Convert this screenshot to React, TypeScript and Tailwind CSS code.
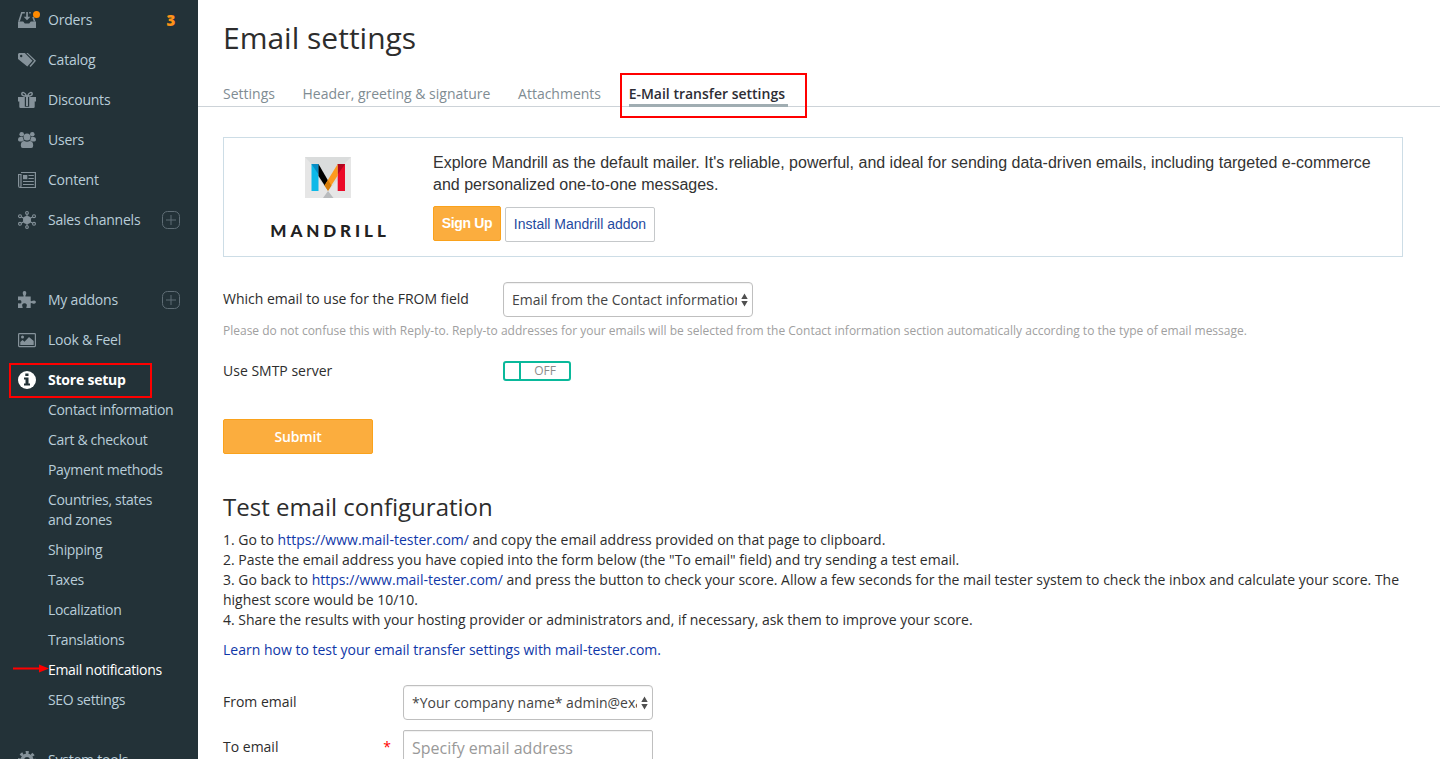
import React from "react";

const OrdersIcon = () => (
  <svg width="18" height="18" viewBox="0 0 18 18" fill="currentColor">
    <path d="M0 10.500h5.200l1.600 2h4.400l1.600-2H18V17H0z" />
    <path d="M1 10.500 3.800 1.800h3M15 6l1.600 4.500" fill="none" stroke="currentColor" strokeWidth="1.600" />
    <path d="M8.200 1h1.700v4.700h2.500L9 9.300 5.700 5.700h2.500zM11.200 1h1.500v1.600h-1.500z" />
  </svg>
);
const TagsIcon = () => (
  <svg width="18" height="18" viewBox="0 0 18 18" fill="currentColor">
    <path fillRule="evenodd" d="M0 3 1 2h5.800L14.500 9.700 9.300 15.500 0 8zM3.200 3.800a1.200 1.200 0 1 0 0 2.400 1.200 1.200 0 0 0 0-2.400z" />
    <path d="M8.300 2h1.500L18 9.800 12.600 15.900l-1.100-1 4.600-5.100z" />
  </svg>
);
const GiftIcon = () => (
  <svg width="18" height="18" viewBox="0 0 18 18" fill="currentColor">
    <path d="M0 6h6.800v4.500H0zM11.200 6H18v4.500h-6.800zM1.300 10h5.500v7H2.500q-1.200 0-1.200-1.200zM11.200 10h5.500v5.800q0 1.200-1.200 1.200h-4.300zM6.500 15.800h5V17h-5zM8 6h2v9H8z" />
    <path d="M8.500 5.200C7.300 1 3.800.6 3.800 2.800 3.800 4.700 6 5.200 8.500 5.200zM9.500 5.200c1.200-4.200 4.700-4.600 4.700-2.400C14.200 4.700 12 5.200 9.500 5.200z" fill="none" stroke="currentColor" strokeWidth="1.500" />
  </svg>
);
const UsersIcon = () => (
  <svg width="18" height="18" viewBox="0 0 18 18" fill="currentColor">
    <circle cx="3.700" cy="3.300" r="2.300" />
    <circle cx="14.300" cy="3.300" r="2.300" />
    <circle cx="9" cy="6" r="3.500" />
    <path d="M0 8.500Q0 6 2 6h2.700q.2 2.200 1.600 3.500-1.700.2-2.500 1H1.500Q0 10.500 0 8.500zM18 8.500Q18 6 16 6h-2.700q-.2 2.200-1.600 3.500 1.700.2 2.500 1h2.300q1.500 0 1.500-2zM2.800 14.500q0-4.300 3.500-4.500 2.700 1.400 5.400 0 3.500.2 3.500 4.500 0 2.500-2 2.500H4.800q-2 0-2-2.500z" />
  </svg>
);
const NewsIcon = () => (
  <svg width="18" height="18" viewBox="0 0 18 18" fill="none" stroke="currentColor" strokeWidth="1.200">
    <path d="M3 1.500h14.400v15H2.200Q.6 16.500.6 15V3.500H3V15q0 1.500-1.200 1.500" />
    <path d="M10.500 4.500h5.300M10.500 7.500h5.300M5 10.500h10.800M5 13.500h10.800" />
    <path d="M5 4h4.300v4.200H5z" fill="currentColor" stroke="none" />
  </svg>
);
const ChannelsIcon = () => (
  <svg width="18" height="18" viewBox="0 0 18 18" fill="none" stroke="currentColor" strokeWidth="1.100">
    <circle cx="9" cy="9" r="4" fill="currentColor" stroke="none" />
    <path d="M9 3v12M3.500 6l11 6M14.500 6l-11 6" />
    <circle cx="9" cy="1.900" r="1.350" />
    <circle cx="9" cy="16.100" r="1.350" />
    <circle cx="2" cy="5.200" r="1.450" />
    <circle cx="16" cy="5.200" r="1.450" />
    <circle cx="2" cy="12.800" r="1.450" />
    <circle cx="16" cy="12.800" r="1.450" />
  </svg>
);
const PuzzleIcon = () => (
  <svg width="18" height="18" viewBox="0 0 18 18" fill="currentColor">
    <path transform="translate(0 -1)" d="M0 6.600h5.500Q6 6 5 4.600 4 1.300 6.500 1 9 1.300 8 4.600 7 6 7.500 6.600h5.200v4.200q.5.800 2-.1 2.800-1 3.300 1.300-.5 2.400-3.300 1.400-1.500-.9-2-.1V18H8.500q-.6-.7.200-1.800.8-2.700-2.200-3-3 .3-2.200 3Q5.100 17.300 4.500 18H0v-4.400q.7-.7 1.700 0 1.800.1 1.800-1.700t-1.800-1.800q-1 .7-1.700 0z" />
  </svg>
);
const PictureIcon = () => (
  <svg width="18" height="18" viewBox="0 0 18 18" fill="currentColor">
    <rect x=".6" y="2.600" width="16.800" height="13" rx=".8" fill="none" stroke="currentColor" strokeWidth="1.200" />
    <circle cx="4.500" cy="6" r="1.500" />
    <path d="M2.300 14v-3l2.200-2 2 1.800L11 6l4.700 4v4z" />
  </svg>
);
const InfoIcon = () => (
  <svg width="18" height="18" viewBox="0 0 18 18">
    <circle cx="9" cy="9" r="9" fill="#fff" />
    <path d="M7.300 2.500h3.200v2.600H7.300zM6 6.600h4.500v6H12v1.900H6v-1.900h1.500V8.500H6z" fill="#233238" />
  </svg>
);
const GearIcon = () => (
  <svg width="18" height="18" viewBox="0 0 18 18" fill="none" stroke="currentColor">
    <circle cx="9" cy="9" r="4.700" strokeWidth="3.600" />
    <circle cx="9" cy="9" r="7.500" strokeWidth="3" strokeDasharray="2.945 2.945" strokeDashoffset="1.470" />
  </svg>
);

type Item = { label: string; icon: React.ReactNode; plus?: boolean; count?: string };
const top: Item[] = [
  { label: "Orders", icon: <OrdersIcon />, count: "3" },
  { label: "Catalog", icon: <TagsIcon /> },
  { label: "Discounts", icon: <GiftIcon /> },
  { label: "Users", icon: <UsersIcon /> },
  { label: "Content", icon: <NewsIcon /> },
  { label: "Sales channels", icon: <ChannelsIcon />, plus: true },
];
const lower: Item[] = [
  { label: "My addons", icon: <PuzzleIcon />, plus: true },
  { label: "Look & Feel", icon: <PictureIcon /> },
];
const sub = ["Contact information", "Cart & checkout", "Payment methods", "Countries, states and zones", "Shipping", "Taxes", "Localization", "Translations", "Email notifications", "SEO settings"];

const NavRow = ({ label, icon, plus, count }: Item) => (
  <a className="flex h-10 shrink-0 items-center pl-[18px] pr-[18px] tracking-[-0.22px]">
    <span className="relative mr-3 w-[18px] shrink-0 text-[#85929a]">
      {icon}
      {count && <span className="absolute left-[15px] top-0 size-[7px] rounded-full bg-[#ff8a00]" />}
    </span>
    <span className="flex-1 whitespace-nowrap">{label}</span>
    {count && <b className="pr-[5px] text-[15px] font-extrabold text-[#ff9317]">{count}</b>}
    {plus && (
      <svg width="18" height="18" viewBox="0 0 18 18" fill="none" stroke="#5f6d75">
        <rect x=".5" y=".5" width="17" height="17" rx="5" />
        <path d="M9 4v10M4 9h10" />
      </svg>
    )}
  </a>
);

const Select = ({ text }: { text: string }) => (
  <div className="flex h-[35px] w-[250px] items-center rounded-[4px] border border-[#bfbfbf] bg-white pl-2 pr-1 text-[#444] shadow-[inset_0_1px_1px_rgba(0,0,0,0.06)]">
    <span className="w-[226px] overflow-hidden whitespace-nowrap">{text}</span>
    <svg className="ml-[4px] shrink-0" width="7" height="14" viewBox="0 0 7 14" fill="#505050">
      <path d="M3.500.500 6.700 6H.3zM3.500 13.500 6.700 8H.3z" />
    </svg>
  </div>
);

const Link = ({ children }: { children: React.ReactNode }) => <a className="text-[#0f37a8]">{children}</a>;

const Mandrill = () => (
  <svg width="46" height="41" viewBox="0 0 46 41">
    <path d="M0 0h46v41H0z" fill="#e6e6e6" />
    <path d="M0 0h46L39 7v9L23 34 6.500 12V7z" fill="#dadcdc" />
    <path d="M18 41 23 34l5.500 7z" fill="#b9bbbd" />
    <path d="M6.500 7h7v27h-7z" fill="#0cb9e8" />
    <path d="M6.500 7h7v10.500z" fill="#078cc4" />
    <path d="M32.700 7H40v27h-7.300z" fill="#ec0928" />
    <path d="M40 7 32.700 17.500V7z" fill="#b00720" />
    <path d="M13.500 7 23 23.500 20 29l-6.500-10z" fill="#000" />
    <path d="M32.700 7v11.500L23 33.500l-3.500-5z" fill="#fd9a1f" />
    <path d="M23 23.200 26.500 28.500 23 34l-3.500-5.500z" fill="#d77c08" />
  </svg>
);

export default function App() {
  return (
    <div className="relative flex h-[759px] w-[1440px] overflow-hidden bg-white font-['Open_Sans',sans-serif] text-[14px] leading-5 text-[#2d2d2d]">
      <aside className="flex w-[198px] shrink-0 flex-col overflow-hidden bg-[#233238] text-[#b9cdd8]">
        {top.map((i) => <NavRow key={i.label} {...i} />)}
        <div className="h-10 shrink-0" />
        {lower.map((i) => <NavRow key={i.label} {...i} />)}
        <a className="flex h-10 shrink-0 items-center gap-3 pl-[18px] font-bold tracking-[-0.22px] text-white"><InfoIcon />Store setup</a>
        <nav className="-mt-[5px] flex shrink-0 flex-col pl-12 pr-6 tracking-[-0.31px]">
          {sub.map((s) => (
            <a key={s} className={s === "Email notifications" ? "py-[5px] text-white" : "py-[5px]"}>{s}</a>
          ))}
        </nav>
        <div className="h-[25px] shrink-0" />
        <NavRow label="System tools" icon={<GearIcon />} />
      </aside>

      <main className="min-w-0 flex-1">
        <h1 className="pl-[25px] pt-[18px] text-[30px] leading-10">Email settings</h1>
        <div className="mt-[23px] flex h-[26px] gap-[27.6px] border-b border-[#cdd3d8] pl-[25px] pt-[3px] text-[#7f8c93]">
          <span>Settings</span>
          <span>Header, greeting &amp; signature</span>
          <span>Attachments</span>
          <span className="h-[23px] w-[159px] whitespace-nowrap border-b-[3px] border-[#a0adb2] font-semibold text-[#2d2d35]">E-Mail transfer settings</span>
        </div>
        <div className="ml-[25px] mr-[37px]">
          <section className="mt-[30px] flex h-[120px] border border-[#cddde6]">
            <div className="flex w-[209px] flex-col items-center pr-px pt-[19px]">
              <Mandrill />
              <div className="mt-[23px] pl-[4px] font-[Lato] text-[17px] font-black leading-5 tracking-[3.900px] text-[#222]">MANDRILL</div>
            </div>
            <div className="flex-1 pt-[14px] font-['Liberation_Sans',sans-serif]">
              <p className="text-[16px] leading-[22px] text-[#333]">Explore Mandrill as the default mailer. It's reliable, powerful, and ideal for sending data-driven emails, including targeted e-commerce<br />and personalized one-to-one messages.</p>
              <div className="mt-[10px] flex gap-1">
                <button className="h-[35px] w-[68px] rounded-[2px] border border-[#faa21c] bg-[#fbad3e] pb-[2px] text-[14px] font-bold tracking-[-0.35px] text-white">Sign Up</button>
                <button className="mt-px h-[35px] w-[150px] rounded-[2px] border border-[#c5c8ca] bg-white pb-[2px] text-[14px] text-[#1f4aa0]">Install Mandrill addon</button>
              </div>
            </div>
          </section>

          <div className="mt-[25px] flex"><label className="w-[280px] pt-[7px]">Which email to use for the FROM field</label><Select text="Email from the Contact information" /></div>
          <p className="mt-1 text-[12px] text-[#a0a0a0]">Please do not confuse this with Reply-to. Reply-to addresses for your emails will be selected from the Contact information section automatically according to the type of email message.</p>
          <div className="mt-5 flex">
            <label className="w-[280px]">Use SMTP server</label>
            <div className="flex h-5 w-[68px] rounded-[3px] border-2 border-[#0ab99b] text-[12px] leading-4 text-[#8b8b8b]">
              <span className="w-4 border-r-2 border-[#0ab99b]" />
              <span className="flex-1 text-center">OFF</span>
            </div>
          </div>
          <button className="mt-[38px] block h-[35px] w-[150px] rounded-[2px] border border-[#faa21c] bg-[#fbad3e] font-semibold tracking-[-0.15px] text-white">Submit</button>

          <h2 className="mt-[38px] text-[24px] leading-[30px]">Test email configuration</h2>
          <div className="mt-[8px] -mr-4">
            <p>1. Go to <Link>https://www.mail-tester.com/</Link> and copy the email address provided on that page to clipboard.</p>
            <p>2. Paste the email address you have copied into the form below (the "To email" field) and try sending a test email.</p>
            <p>3. Go back to <Link>https://www.mail-tester.com/</Link> and press the button to check your score. Allow a few seconds for the mail tester system to check the inbox and calculate your score. The<br />highest score would be 10/10.</p>
            <p>4. Share the results with your hosting provider or administrators and, if necessary, ask them to improve your score.</p>
            <p className="mt-[10px]"><Link>Learn how to test your email transfer settings with mail-tester.com.</Link></p>
          </div>
          <div className="mt-[25px] flex"><label className="w-[180px] pt-[7px]">From email</label><Select text="*Your company name* admin@example.com" /></div>
          <div className="mt-[10px] flex">
            <label className="flex w-[180px] justify-between pr-3 pt-[7px]">To email<span className="text-[#f00]">*</span></label>
            <div className="h-[35px] w-[250px] rounded-[2px] border border-[#bfbfbf] pl-2 pt-[7px] text-[16px] text-[#999] shadow-[inset_0_1px_1px_rgba(0,0,0,0.06)]">Specify email address</div>
          </div>
        </div>
      </main>

      <div className="absolute left-[9px] top-[363px] h-[35px] w-[143px] border-2 border-[#f00]" />
      <div className="absolute left-[620px] top-[73px] h-[45px] w-[187px] border-2 border-[#f00]" />
      <svg className="absolute left-[13px] top-[664px]" width="36" height="9" viewBox="0 0 36 9" fill="#f00"><path d="M0 3.500h26V.5l10 4-10 4v-3H0z" /></svg>
    </div>
  );
}
